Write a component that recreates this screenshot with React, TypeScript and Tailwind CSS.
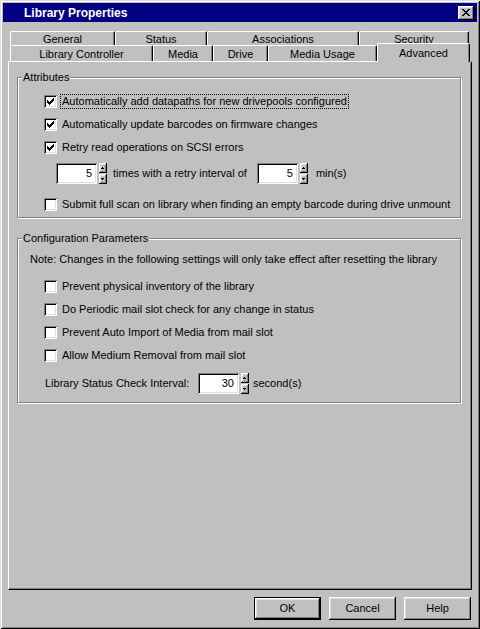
import React from "react";

const raised =
  "shadow-[inset_-1px_-1px_0_#000,inset_1px_1px_0_#fff,inset_-2px_-2px_0_#808080,inset_2px_2px_0_#dfdfdf]";
const sunken =
  "shadow-[inset_1px_1px_0_#808080,inset_-1px_-1px_0_#fff,inset_2px_2px_0_#000,inset_-2px_-2px_0_#dfdfdf]";

// classic 7x7 check glyph, one 3px run per column
const checkRuns = [2, 3, 4, 3, 2, 1, 0];

const CheckBox = ({ label, checked, focused }: { label: string; checked?: boolean; focused?: boolean }) => (
  <div className="flex items-center h-[13px] gap-[3px]">
    <div className={`w-[13px] h-[13px] bg-white shrink-0 ${sunken}`}>
      {checked && (
        <svg width="13" height="13" viewBox="0 0 13 13" shapeRendering="crispEdges">
          {checkRuns.map((r, c) => (
            <rect key={c} x={3 + c} y={3 + r} width="1" height="3" fill="#000" />
          ))}
        </svg>
      )}
    </div>
    <span
      className={`px-[1px] leading-[13px] border border-dotted ${
        focused ? "border-black" : "border-transparent"
      }`}
    >
      {label}
    </span>
  </div>
);

const Arrow = ({ up }: { up?: boolean }) => (
  <svg width="8" height="10" viewBox="0 0 8 10" shapeRendering="crispEdges">
    {up ? (
      <>
        <rect x="3" y="4" width="1" height="1" fill="#000" />
        <rect x="2" y="5" width="3" height="1" fill="#000" />
      </>
    ) : (
      <>
        <rect x="2" y="4" width="3" height="1" fill="#000" />
        <rect x="3" y="5" width="1" height="1" fill="#000" />
      </>
    )}
  </svg>
);

const Spin = ({ value }: { value: string }) => (
  <div className="flex items-center shrink-0">
    <div className={`w-[41px] h-[21px] bg-white flex items-center justify-end pr-[5px] ${sunken}`}>{value}</div>
    <div className="ml-[2px] flex flex-col gap-[1px]">
      <div className={`w-[8px] h-[10px] bg-[#c0c0c0] ${raised}`}>
        <Arrow up />
      </div>
      <div className={`w-[8px] h-[10px] bg-[#c0c0c0] ${raised}`}>
        <Arrow />
      </div>
    </div>
  </div>
);

const tabEdge =
  "border-l border-t border-white border-r border-r-black shadow-[inset_-1px_0_0_#808080] rounded-t-[2px] bg-[#c0c0c0]";

const Tab = ({ label, w }: { label: string; w: string }) => (
  <div className={`${w} h-full ${tabEdge} flex justify-center items-center pt-[1px]`}>{label}</div>
);

const Btn = ({ label, primary }: { label: string; primary?: boolean }) => (
  <div
    className={`w-[67px] h-[23px] flex items-center justify-center ${
      primary ? "border border-black" : ""
    } ${raised}`}
  >
    {label}
  </div>
);

export default function App() {
  return (
    <div className="w-[480px] h-[629px] bg-[#c0c0c0] p-[3px] flex flex-col text-[11px] text-black font-[family-name:'Liberation_Sans',Arial,sans-serif] shadow-[inset_1px_1px_0_#dfdfdf,inset_-1px_-1px_0_#000,inset_2px_2px_0_#fff,inset_-2px_-2px_0_#808080]">
      {/* title bar */}
      <div className="h-[19px] bg-[#000080] flex items-center pl-[21px] pr-[3px]">
        <span className="text-white font-bold text-[12px] flex-1">Library Properties</span>
        <div className={`w-[16px] h-[14px] bg-[#c0c0c0] flex items-center justify-center ${raised}`}>
          <svg width="8" height="7" viewBox="0 0 8 7" shapeRendering="crispEdges">
            <path d="M0 0h2v1H0zM6 0h2v1H6zM1 1h2v1H1zM5 1h2v1H5zM2 2h4v1H2zM3 3h2v1H3zM2 4h4v1H2zM1 5h2v1H1zM5 5h2v1H5zM0 6h2v1H0zM6 6h2v1H6z" fill="#000" />
          </svg>
        </div>
      </div>

      {/* tabs */}
      <div className="mt-[8px] ml-[7px] flex h-[15px] pt-[1px]">
        <Tab label="General" w="w-[105px]" />
        <Tab label="Status" w="w-[92px]" />
        <Tab label="Associations" w="w-[152px]" />
        <Tab label="Security" w="w-[110px]" />
      </div>
      <div className="ml-[7px] flex h-[16px] items-start">
        <Tab label="Library Controller" w="w-[143px]" />
        <Tab label="Media" w="w-[60px]" />
        <Tab label="Drive" w="w-[55px]" />
        <Tab label="Media Usage" w="w-[109px]" />
        <div
          className={`relative z-10 -mt-[2px] h-[19px] w-[93px] ${tabEdge} flex justify-center pt-[1px]`}
        >
          Advanced
        </div>
      </div>

      {/* page */}
      <div className="ml-[5px] w-[464px] h-[529px] border-l border-t border-white border-r border-b border-r-black border-b-black shadow-[inset_-1px_-1px_0_#808080]">
        <fieldset className="mt-[9px] ml-[8px] w-[444px] border border-[#808080] shadow-[1px_1px_0_#fff,inset_1px_1px_0_#fff] px-0 pb-[6px]">
          <legend className="ml-[4px] px-[1px] leading-[13px] bg-[#c0c0c0]">Attributes</legend>
          <div className="pl-[26px] pt-[11px] flex flex-col">
            <div className="flex flex-col gap-[10px]">
              <CheckBox label="Automatically add datapaths for new drivepools configured" checked focused />
              <CheckBox label="Automatically update barcodes on firmware changes" checked />
              <CheckBox label="Retry read operations on SCSI errors" checked />
            </div>
            <div className="mt-[9px] ml-[12px] flex items-center">
              <Spin value="5" />
              <span className="ml-[6px]">times with a retry interval of</span>
              <span className="ml-[10px]">
                <Spin value="5" />
              </span>
              <span className="ml-[8px]">min(s)</span>
            </div>
            <div className="mt-[14px]">
              <CheckBox label="Submit full scan on library when finding an empty barcode during drive unmount" />
            </div>
          </div>
        </fieldset>

        <fieldset className="mt-[14px] ml-[8px] w-[444px] border border-[#808080] shadow-[1px_1px_0_#fff,inset_1px_1px_0_#fff] px-0 pb-[8px]">
          <legend className="ml-[4px] px-[1px] leading-[13px] bg-[#c0c0c0]">Configuration Parameters</legend>
          <div className="pl-[12px] pt-[8px] leading-[13px]">
            Note: Changes in the following settings will only take effect after resetting the library
          </div>
          <div className="pl-[26px] pt-[14px] flex flex-col gap-[10px]">
            <CheckBox label="Prevent physical inventory of the library" />
            <CheckBox label="Do Periodic mail slot check for any change in status" />
            <CheckBox label="Prevent Auto Import of Media from mail slot" />
            <CheckBox label="Allow Medium Removal from mail slot" />
          </div>
          <div className="pl-[27px] mt-[11px] flex items-center">
            <span className="w-[153px]">Library Status Check Interval:</span>
            <Spin value="30" />
            <span className="ml-[4px]">second(s)</span>
          </div>
        </fieldset>
      </div>

      {/* buttons */}
      <div className="mt-[7px] flex justify-end gap-[8px] pr-[6px]">
        <Btn label="OK" primary />
        <Btn label="Cancel" />
        <Btn label="Help" />
      </div>
    </div>
  );
}
